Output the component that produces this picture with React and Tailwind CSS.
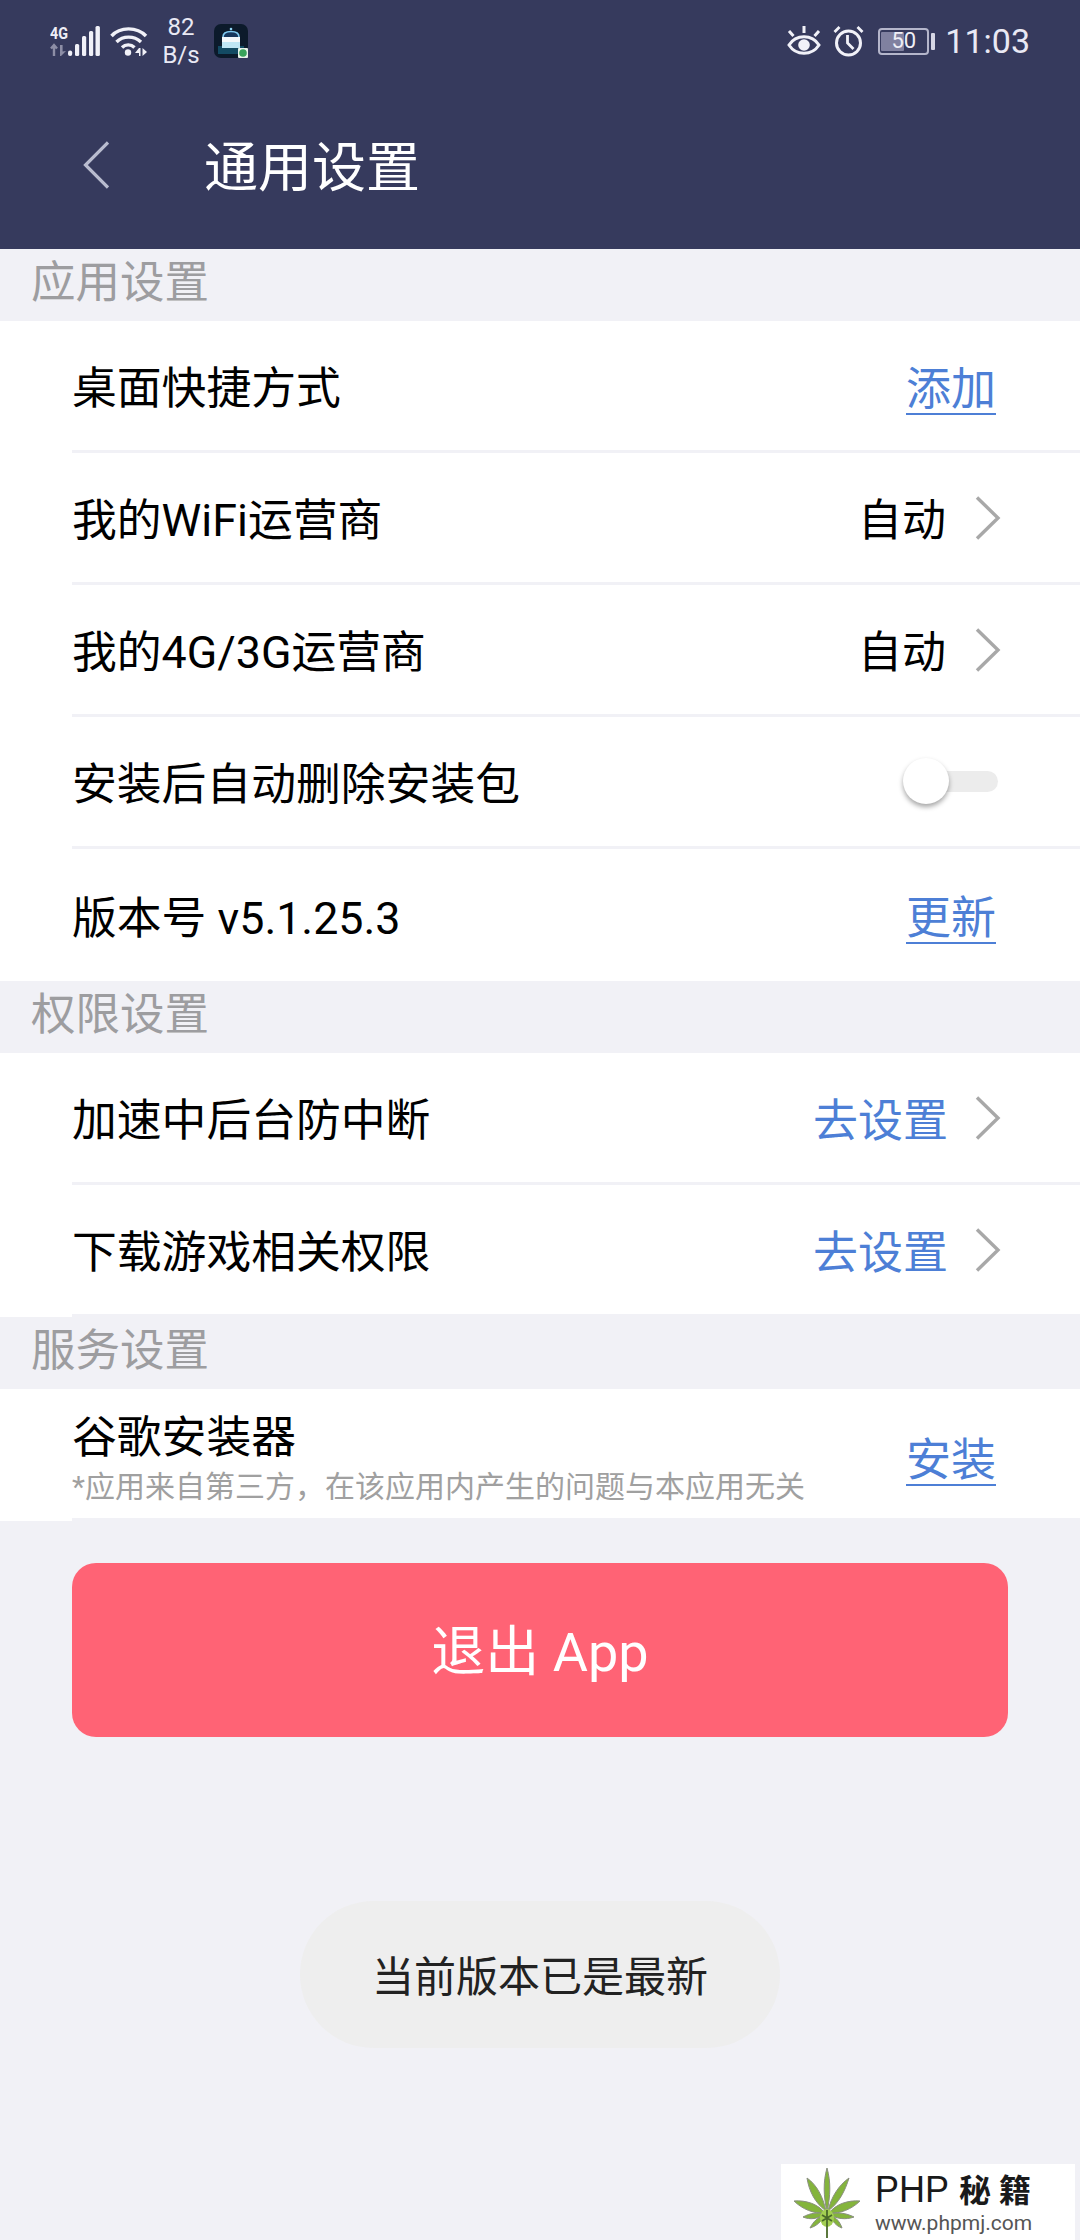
import React from 'react';

const FONT = 'font-["Roboto","Noto_Sans_CJK_SC",sans-serif]';

const Chevron = () => (
  <svg width="26" height="44" viewBox="0 0 26 44" fill="none" className="ml-[29px]">
    <path d="M2 1.5 L23 22 L2 42.5" stroke="#a8a8a8" strokeWidth="3.4" />
  </svg>
);

const StatusBar = () => (
  <div className="flex h-[80px] items-center justify-between pl-[50px] pr-[50px] pt-[2px] text-[#e9e9f4]">
    <div className="flex items-center">
      {/* 4G signal */}
      <svg width="52" height="36" viewBox="0 0 52 36">
        <text x="0" y="15.5" fontSize="17" fontWeight="700" fill="#eeeef6" fontFamily="Roboto" textLength="18" lengthAdjust="spacingAndGlyphs">4G</text>
        <path d="M4 22v11M1 25.5l3-3.5 3 3.5" stroke="#8d8ea6" strokeWidth="2.4" fill="none" />
        <path d="M10 22h2.6v6.5L16 28l-5 5h-1z" fill="#8d8ea6" />
        <rect x="18" y="27.5" width="4.2" height="5.5" rx="2" fill="#f1f1f8" />
        <rect x="25" y="21" width="4.2" height="12" rx="1.5" fill="#f1f1f8" />
        <rect x="32" y="13" width="4.2" height="20" rx="1.5" fill="#f1f1f8" />
        <rect x="39" y="8" width="4.2" height="25" rx="1.5" fill="#f1f1f8" />
        <rect x="45.5" y="3" width="4.4" height="30" rx="1.5" fill="#f1f1f8" />
      </svg>
      {/* wifi */}
      <svg width="38" height="32" viewBox="0 0 38 32" className="ml-[8px]">
        <path d="M1.5 11C10 1.5 27 1.5 36 11M6.5 17C13 10.5 24 10.5 31 17M12 22.5C15.5 19 21 19 24.5 22.5" stroke="#f1f1f8" strokeWidth="3.4" fill="none" />
        <circle cx="18" cy="27.5" r="3.2" fill="#f1f1f8" />
        <path d="M25 28l4-5h1.5v8H29v-3zM32.5 23l4.5 4-4.5 4z" fill="#f1f1f8" />
      </svg>
      <div className="ml-[16px] flex w-[34px] flex-col items-center text-[24px] leading-[28px]">
        <span>82</span>
        <span>B/s</span>
      </div>
      {/* app icon */}
      <svg width="35" height="35" viewBox="0 0 35 35" className="ml-[16px] mt-[1px]">
        <rect width="34" height="34" rx="7" fill="#0c1a2b" />
        <rect x="4" y="22" width="26" height="8" fill="#134a63" />
        <circle cx="17" cy="5" r="1.3" fill="#8fd3f2" />
        <path d="M9 13C9 9 12 7.5 17 7.5S25 9 25 13" fill="#16365c" stroke="#7fc8ef" strokeWidth="1.6" />
        <rect x="8" y="13" width="18" height="5" fill="#f4f8fb" />
        <rect x="8" y="18" width="18" height="6" fill="#bfe6f5" />
        <rect x="24" y="24" width="10" height="10" rx="1" fill="#e8f3ea" />
        <circle cx="29" cy="29" r="3.8" fill="#38a35a" />
      </svg>
    </div>
    <div className="flex items-center">
      {/* eye */}
      <svg width="34" height="30" viewBox="0 0 34 30">
        <path d="M2 19C9 8 25 8 32 19C25 30 9 30 2 19Z" stroke="#f1f1f8" strokeWidth="3" fill="none" />
        <circle cx="17" cy="19" r="5.8" fill="#f1f1f8" />
        <path d="M17 0v7M2 5l4.5 5M32 5l-4.5 5" stroke="#f1f1f8" strokeWidth="3" />
      </svg>
      {/* alarm */}
      <svg width="31" height="32" viewBox="0 0 31 32" className="ml-[12px]">
        <circle cx="15.5" cy="18" r="12" stroke="#f1f1f8" strokeWidth="3" fill="none" />
        <path d="M14.5 10v8l6 6M1.5 7l5-5M29.5 7l-5-5" stroke="#f1f1f8" strokeWidth="2.8" fill="none" />
      </svg>
      {/* battery */}
      <div className="ml-[14px] flex items-center">
        <div className="relative flex h-[27px] w-[51px] items-center justify-center overflow-hidden rounded-[4px] border-2 border-[#b5b6cb]">
          <div className="absolute inset-y-[2px] left-[1px] w-[23px] rounded-[1px] bg-[#8081a0]" />
          <span className="relative text-[22px] leading-none text-[#eeeef6]">50</span>
        </div>
        <div className="ml-[2px] h-[17px] w-[4px] rounded-[1px] bg-[#d6d6e4]" />
      </div>
      <span className="ml-[10px] text-[34px] leading-none">11:03</span>
    </div>
  </div>
);

const SectionLabel = ({ children }) => (
  <div className="flex h-[72px] items-center pl-[31px] pb-[4px] text-[44.5px] leading-none text-[#9d9da0]">{children}</div>
);

const LinkAction = ({ children }) => (
  <span className="mr-[5px] flex h-[58px] items-end border-b-2 border-[#4d7fd6] text-[45px] leading-[46px] text-[#4d7fd6]">{children}</span>
);

const Value = ({ children, blue }) => (
  <span className={`pt-[7px] leading-none ${blue ? '-mr-[2px] text-[45px] text-[#4d7fd6]' : 'text-[44px] text-black'}`}>{children}</span>
);

const Row = ({ title, children, last }) => (
  <div className={`flex h-[132px] items-center justify-between pr-[79px] ${last ? '' : 'border-b-[3px] border-[#f1f1f6]'}`}>
    <span className="pt-[8px] text-[44.8px] leading-none text-black">{title}</span>
    <div className="flex items-center">{children}</div>
  </div>
);

const Group = ({ children }) => <div className="bg-white pl-[72px]">{children}</div>;

export default function App() {
  return (
    <div className={`relative h-[2240px] w-[1080px] overflow-hidden bg-[#f1f1f6] ${FONT}`}>
      <header className="h-[249px] bg-[#363a5d]">
        <StatusBar />
        <div className="flex h-[169px] items-center pl-[83px] pt-[8px]">
          <svg width="26" height="48" viewBox="0 0 26 48" fill="none" className="mb-[8px]">
            <path d="M25 1.5 L2.5 24 L25 46.5" stroke="#b9bccf" strokeWidth="3.2" />
          </svg>
          <h1 className="ml-[95px] text-[54px] font-normal leading-none text-white">通用设置</h1>
        </div>
      </header>

      <SectionLabel>应用设置</SectionLabel>
      <Group>
        <Row title="桌面快捷方式">
          <LinkAction>添加</LinkAction>
        </Row>
        <Row title="我的WiFi运营商">
          <Value>自动</Value>
          <Chevron />
        </Row>
        <Row title="我的4G/3G运营商">
          <Value>自动</Value>
          <Chevron />
        </Row>
        <Row title="安装后自动删除安装包">
          <div className="relative mr-[3px] h-[21px] w-[84px] rounded-full bg-[#ececec]">
            <div className="absolute -left-[11px] -top-[13px] h-[46px] w-[46px] rounded-full bg-white shadow-[0_3px_5px_rgba(0,0,0,0.35)]" />
          </div>
        </Row>
        <Row title="版本号 v5.1.25.3" last>
          <LinkAction>更新</LinkAction>
        </Row>
      </Group>

      <SectionLabel>权限设置</SectionLabel>
      <Group>
        <Row title="加速中后台防中断">
          <Value blue>去设置</Value>
          <Chevron />
        </Row>
        <Row title="下载游戏相关权限">
          <Value blue>去设置</Value>
          <Chevron />
        </Row>
      </Group>

      <SectionLabel>服务设置</SectionLabel>
      <Group>
        <div className="flex h-[132px] items-center justify-between border-b-[3px] border-[#f1f1f6] pr-[79px]">
          <div className="flex flex-col pt-[11px]">
            <span className="text-[44.8px] leading-[52px] text-black">谷歌安装器</span>
            <span className="pt-[4px] text-[30px] leading-[38px] text-[#a0a0a0]">*应用来自第三方，在该应用内产生的问题与本应用无关</span>
          </div>
          <div className="pt-[6px]">
            <LinkAction>安装</LinkAction>
          </div>
        </div>
      </Group>

      <button className="ml-[72px] mt-[42px] flex h-[174px] w-[936px] items-center justify-center rounded-[24px] bg-[#ff6375] pt-[5px] text-[54px] leading-none text-white">
        退出 App
      </button>

      {/* toast */}
      <div className="absolute left-[300px] top-[1901px] flex h-[147px] w-[480px] items-center justify-center rounded-full bg-[#eeeeee] pt-[6px] text-[42px] leading-none text-[#222]">
        当前版本已是最新
      </div>

      {/* watermark */}
      <div className="absolute bottom-0 right-[5px] flex h-[76px] w-[294px] items-start bg-white pl-[13px] pt-[4px]">
        <svg width="66" height="71" viewBox="0 0 66 71" className="shrink-0">
          <g fill="#84b43c" stroke="#8a8f80" strokeWidth="1">
            <path d="M33 0C37 14 36.5 28 33 44C29.5 28 29 14 33 0Z" />
            <path d="M13 10C23 17 29 29 32 43C21 35 15 23 13 10Z" />
            <path d="M55 10C45 17 37 29 34 43C45 35 51 23 55 10Z" />
            <path d="M0 33C12 32 24 36 31 45C20 46 8 41 0 33Z" />
            <path d="M66 33C54 32 42 36 35 45C46 46 58 41 66 33Z" />
            <path d="M9 49C16 45 24 44 31 46C24 51 16 52 9 49Z" />
            <path d="M60 49C52 45 44 44 35 46C42 51 52 52 60 49Z" />
            <path d="M16 60C19 54 24 49 30 47C28 53 23 58 16 60Z" />
            <path d="M48 60C46 54 42 49 36 47C38 53 42 58 48 60Z" />
          </g>
          <ellipse cx="33" cy="50" rx="7" ry="9" fill="#a3cf52" />
          <path d="M33 42V70M28 47l10 6M38 47l-10 6" stroke="#4b6b2a" strokeWidth="1.8" />
        </svg>
        <div className="ml-[15px] flex flex-col">
          <div className="flex items-baseline font-['Liberation_Sans','Noto_Sans_CJK_SC',sans-serif] text-[#1a1a1a]">
            <span className="text-[36px] leading-[41px]">PHP</span>
            <span className="ml-[10px] font-['Noto_Sans_CJK_SC',sans-serif] text-[32px] font-bold leading-[41px] tracking-[8px]">秘籍</span>
          </div>
          <span className="text-[21px] leading-[26px] text-[#555]">www.phpmj.com</span>
        </div>
      </div>
    </div>
  );
}
